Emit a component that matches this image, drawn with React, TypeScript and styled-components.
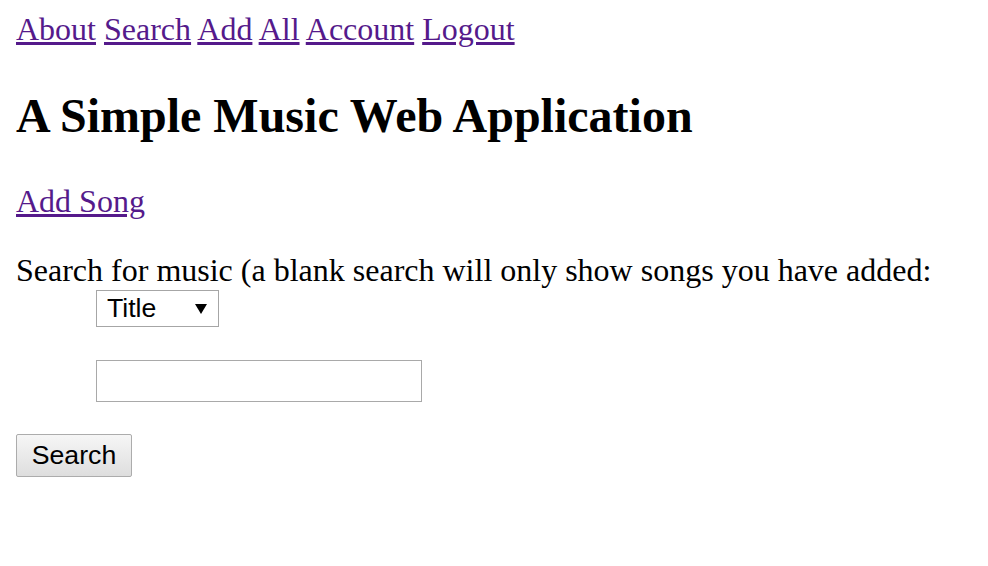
import React from 'react';
import styled, { createGlobalStyle } from 'styled-components';

const GlobalStyle = createGlobalStyle`
  body {
    margin: 0;
    background: #ffffff;
    color: #000000;
    font-family: "Liberation Serif", "Times New Roman", serif;
  }
`;

const navItems = ['About', 'Search', 'Add', 'All', 'Account', 'Logout'];

const App = () => {
  return (
    <>
      <GlobalStyle />
      <Page>
        <Nav>
          {navItems.map((item, i) => (
            <React.Fragment key={item}>
              <TextLink href="#">{item}</TextLink>
              {i < navItems.length - 1 && ' '}
            </React.Fragment>
          ))}
        </Nav>

        <Title>A Simple Music Web Application</Title>

        <Para>
          <TextLink href="#">Add Song</TextLink>
        </Para>

        <SearchForm onSubmit={(e) => e.preventDefault()}>
          <Prompt>Search for music (a blank search will only show songs you have added:</Prompt>

          <Indent>
            <SelectWrap>
              <Select defaultValue="title">
                <option value="title">Title</option>
                <option value="artist">Artist</option>
                <option value="album">Album</option>
              </Select>
              <Arrow viewBox="0 0 12 10" aria-hidden="true">
                <path d="M0 0 L12 0 L6 10 Z" fill="#000" />
              </Arrow>
            </SelectWrap>
          </Indent>

          <InputRow>
            <TextInput type="text" />
          </InputRow>

          <SearchButton type="submit">Search</SearchButton>
        </SearchForm>
      </Page>
    </>
  );
};

const Page = styled.div`
  padding: 11px 16px 0;
  font-size: 32px;
`;

const Nav = styled.div`
  font-size: 32px;
  line-height: normal;
`;

const TextLink = styled.a`
  color: #551a8b;
  text-decoration: underline;
`;

const Title = styled.h1`
  font-size: 48px;
  font-weight: bold;
  margin: 0.83em 0;
  line-height: normal;
`;

const Para = styled.p`
  margin: 32px 0;
  line-height: normal;
`;

const SearchForm = styled.form`
  margin: 0;
`;

const Prompt = styled.div`
  line-height: normal;
`;

const Indent = styled.div`
  padding-left: 80px;
  margin-top: 1px;
`;

const SelectWrap = styled.span`
  position: relative;
  display: inline-block;
  vertical-align: top;
`;

const Select = styled.select`
  appearance: none;
  -webkit-appearance: none;
  display: block;
  box-sizing: border-box;
  width: 123px;
  height: 37px;
  padding: 0 30px 0 10px;
  border: 1px solid #a6a6a6;
  border-radius: 0;
  background: #ffffff;
  color: #000000;
  font-family: "Liberation Sans", Arial, sans-serif;
  font-size: 26.67px;
`;

const Arrow = styled.svg`
  position: absolute;
  left: 99px;
  top: 14px;
  width: 12px;
  height: 10px;
  pointer-events: none;
`;

const InputRow = styled.div`
  padding-left: 80px;
  margin-top: 33px;
`;

const TextInput = styled.input`
  display: block;
  box-sizing: border-box;
  width: 326px;
  height: 42px;
  padding: 2px 4px;
  border: 1px solid #a9a9a9;
  border-radius: 0;
  font-family: "Liberation Sans", Arial, sans-serif;
  font-size: 26.67px;
  background: #ffffff;
`;

const SearchButton = styled.button`
  display: block;
  box-sizing: border-box;
  margin-top: 32px;
  width: 116px;
  height: 43px;
  padding: 0;
  border: 1px solid #acacac;
  border-radius: 2px;
  background: linear-gradient(#f6f6f6, #dedede);
  color: #000000;
  font-family: "Liberation Sans", Arial, sans-serif;
  font-size: 26.67px;
`;

export default App;
